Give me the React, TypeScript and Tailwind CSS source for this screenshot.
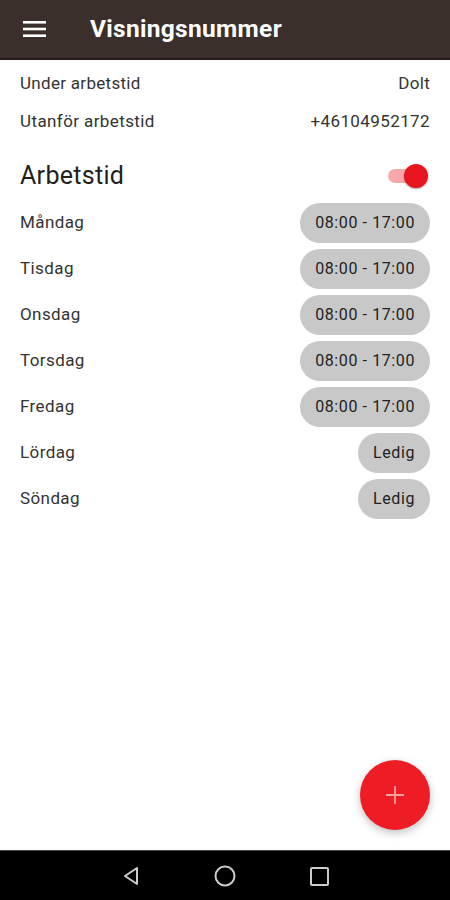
import React from 'react'

const days = [
  { name: 'Måndag', time: '08:00 - 17:00' },
  { name: 'Tisdag', time: '08:00 - 17:00' },
  { name: 'Onsdag', time: '08:00 - 17:00' },
  { name: 'Torsdag', time: '08:00 - 17:00' },
  { name: 'Fredag', time: '08:00 - 17:00' },
  { name: 'Lördag', time: 'Ledig' },
  { name: 'Söndag', time: 'Ledig' },
]

export default function App() {
  return (
    <div
      className="w-[450px] h-[900px] flex flex-col bg-white relative overflow-hidden"
      style={{ fontFamily: 'Roboto, "Noto Sans", sans-serif' }}
    >
      {/* toolbar */}
      <div className="h-[60px] bg-[#3b2f2c] flex items-center border-b-2 border-[#2a1a18] shrink-0">
        <div className="w-[90px] pl-[23px] flex items-center">
          <svg width="24" height="18" viewBox="0 0 24 18">
            <rect x="0" y="1" width="23" height="2.6" fill="#fff" />
            <rect x="0" y="7.7" width="23" height="2.6" fill="#fff" />
            <rect x="0" y="14.4" width="23" height="2.6" fill="#fff" />
          </svg>
        </div>
        <span className="text-white text-[24.5px] font-bold tracking-[0.3px]">Visningsnummer</span>
      </div>

      <div className="flex-1 flex flex-col px-[20px] text-[#333]">
        <div className="flex justify-between items-center h-[38px] mt-[5px] text-[17px] tracking-[0.3px]">
          <span>Under arbetstid</span>
          <span>Dolt</span>
        </div>
        <div className="flex justify-between items-center h-[38px] text-[17px] tracking-[0.4px]">
          <span>Utanför arbetstid</span>
          <span>+46104952172</span>
        </div>

        <div className="flex justify-between items-center h-[40px] mt-[15px]">
          <span className="text-[25px] text-[#1f1f1f] tracking-[0.3px]">Arbetstid</span>
          <div className="relative w-[42px] h-[24px] mr-[2px] flex items-center">
            <div className="w-[34px] h-[14px] rounded-full bg-[#f6a8ab] ml-[2px]" />
            <div className="absolute right-0 top-0 w-[24px] h-[24px] rounded-full bg-[#e8151f] shadow-[0_1px_2px_rgba(0,0,0,0.35)]" />
          </div>
        </div>

        <div className="flex flex-col gap-[6px] mt-[7px]">
          {days.map(d => (
            <div key={d.name} className="flex justify-between items-center h-[40px]">
              <span className="text-[17px] tracking-[0.4px]">{d.name}</span>
              <span className="h-[40px] px-[15px] rounded-full bg-[#c8c8c8] flex items-center text-[16px] text-[#222] tracking-[0.6px]">
                {d.time}
              </span>
            </div>
          ))}
        </div>
      </div>

      {/* fab */}
      <div className="absolute left-[360px] top-[760px] w-[70px] h-[70px] rounded-full bg-[#ee1c25] flex items-center justify-center shadow-[0_3px_8px_rgba(0,0,0,0.25)]">
        <svg width="22" height="22" viewBox="0 0 22 22">
          <path d="M11 2v18M2 11h18" stroke="#f8a0a4" strokeWidth="1.8" />
        </svg>
      </div>

      {/* nav bar */}
      <div className="h-[50px] bg-black flex items-center justify-center gap-[70px] shrink-0 border-t border-[#444]">
        <svg width="24" height="24" viewBox="0 0 24 24">
          <path d="M18 4 L6 12 L18 20 Z" fill="none" stroke="#ccc" strokeWidth="2" strokeLinejoin="round" />
        </svg>
        <svg width="24" height="24" viewBox="0 0 24 24">
          <circle cx="12" cy="12" r="9.5" fill="none" stroke="#ccc" strokeWidth="2" />
        </svg>
        <svg width="24" height="24" viewBox="0 0 24 24">
          <rect x="4" y="4" width="17" height="17" rx="1" fill="none" stroke="#ccc" strokeWidth="2" />
        </svg>
      </div>
    </div>
  )
}
